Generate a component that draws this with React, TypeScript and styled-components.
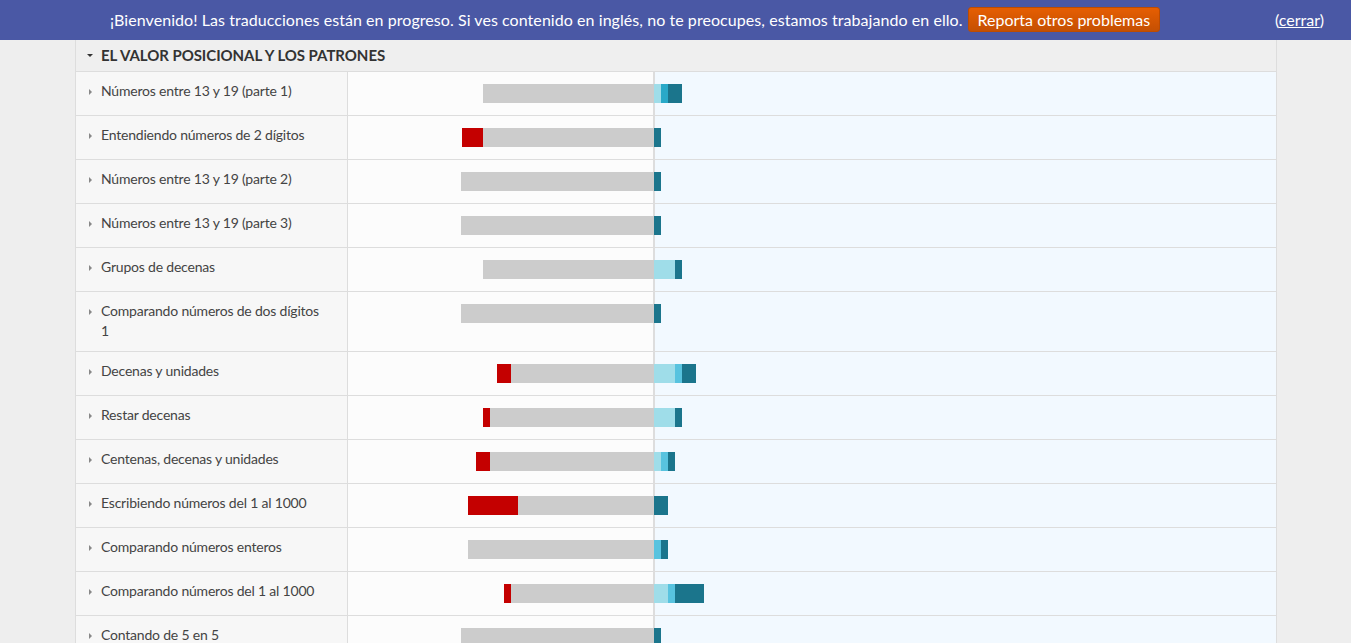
import React from "react";
import styled, { createGlobalStyle } from "styled-components";

const Global = createGlobalStyle`
  html, body { margin: 0; padding: 0; background: #eeeeee; overflow: hidden; }
  body { font-family: Lato, "Open Sans", "Liberation Sans", sans-serif; color: #444; }
`;

const TopBar = styled.div`
  height: 40px;
  background: #4a58a5;
  display: flex;
  align-items: center;
  padding: 0 27px 1px 110px;
  box-sizing: border-box;
  color: #fff;
  font-size: 16px;
`;

const Message = styled.span`
  white-space: nowrap;
  letter-spacing: 0.06px;
`;

const ReportButton = styled.span`
  margin-left: 5px;
  height: 25px;
  box-sizing: border-box;
  padding: 0 9px 1px;
  display: inline-flex;
  align-items: center;
  border-radius: 3px;
  border: 1px solid #bd4c02;
  background: linear-gradient(#e65e02, #c55003);
  color: #fff;
  white-space: nowrap;
`;

const Close = styled.span`
  margin-left: auto;
  white-space: nowrap;
  a { color: #fff; text-decoration: underline; }
`;

const Table = styled.div`
  margin: 0 74px 0 75px;
  border-left: 1px solid #dddddd;
  border-right: 1px solid #dddddd;
`;

const Header = styled.div`
  height: 31px;
  padding-bottom: 1px;
  box-sizing: border-box;
  background: #efefef;
  display: flex;
  align-items: center;
  font-weight: 700;
  font-size: 15px;
  color: #333;
  text-transform: uppercase;
  letter-spacing: -0.05px;
`;

const HeaderCaret = styled.span`
  width: 25px;
  display: flex;
  justify-content: center;
  &::before {
    content: "";
    margin-left: 3px;
    border-left: 3px solid transparent;
    border-right: 3px solid transparent;
    border-top: 3px solid #333;
  }
`;

const Row = styled.div`
  display: grid;
  grid-template-columns: 272px 1fr;
  border-top: 1px solid #dddddd;
`;

const Label = styled.div`
  background: #f7f7f7;
  border-right: 1px solid #dddddd;
  display: flex;
  align-items: flex-start;
  padding: 9px 20px 10px 0;
  font-size: 14px;
  line-height: 20px;
  letter-spacing: -0.2px;
  color: #444;
`;

const Caret = styled.span`
  flex: none;
  width: 25px;
  height: 20px;
  display: flex;
  align-items: center;
  justify-content: center;
  &::before {
    content: "";
    margin: 2px 0 0 3px;
    border-top: 3px solid transparent;
    border-bottom: 3px solid transparent;
    border-left: 3px solid #888;
  }
`;

const Chart = styled.div`
  position: relative;
  display: grid;
  grid-template-columns: 306px 1fr;
  &::before {
    content: "";
    position: absolute;
    left: 305px;
    top: 0;
    bottom: 0;
    width: 2px;
    background: #dddddd;
  }
`;

const NegPane = styled.div`
  background: #fcfcfc;
  padding: 12px 0;
  display: flex;
  justify-content: flex-end;
  align-items: flex-start;
`;

const PosPane = styled.div`
  background: #f2f9ff;
  padding: 12px 0;
  display: flex;
  justify-content: flex-start;
  align-items: flex-start;
`;

const Seg = styled.div<{ $c: string }>`
  position: relative;
  z-index: 1;
  height: 19px;
  flex: none;
  background: ${(p) => p.$c};
`;

const C = {
  red: "#c40000",
  gray: "#cccccc",
  light: "#9fdde9",
  mid: "#58c3df",
  midDeep: "#29a9c8",
  dark: "#1b758c",
};

type Item = {
  label: string;
  red?: number;
  gray: number;
  light?: number;
  mid?: number;
  midDeep?: boolean;
  dark?: number;
};

const rows: Item[] = [
  { label: "Números entre 13 y 19 (parte 1)", gray: 171, light: 7, mid: 7, midDeep: true, dark: 14 },
  { label: "Entendiendo números de 2 dígitos", red: 21, gray: 171, dark: 7 },
  { label: "Números entre 13 y 19 (parte 2)", gray: 193, dark: 7 },
  { label: "Números entre 13 y 19 (parte 3)", gray: 193, dark: 7 },
  { label: "Grupos de decenas", gray: 171, light: 21, dark: 7 },
  { label: "Comparando números de dos dígitos 1", gray: 193, dark: 7 },
  { label: "Decenas y unidades", red: 14, gray: 143, light: 21, mid: 7, dark: 14 },
  { label: "Restar decenas", red: 7, gray: 164, light: 21, dark: 7 },
  { label: "Centenas, decenas y unidades", red: 14, gray: 164, light: 7, mid: 7, dark: 7 },
  { label: "Escribiendo números del 1 al 1000", red: 50, gray: 136, dark: 14 },
  { label: "Comparando números enteros", gray: 186, mid: 7, dark: 7 },
  { label: "Comparando números del 1 al 1000", red: 7, gray: 143, light: 14, mid: 7, dark: 29 },
  { label: "Contando de 5 en 5", gray: 193, dark: 7 },
  { label: "Contando de 10 en 10", gray: 193, dark: 7 },
];

export default function App() {
  return (
    <>
      <Global />
      <TopBar>
        <Message>
          ¡Bienvenido! Las traducciones están en progreso. Si ves contenido en inglés, no te preocupes, estamos trabajando en ello.
        </Message>
        <ReportButton>Reporta otros problemas</ReportButton>
        <Close>
          (<a href="#">cerrar</a>)
        </Close>
      </TopBar>
      <Table>
        <Header>
          <HeaderCaret />
          El valor posicional y los patrones
        </Header>
        {rows.map((r) => (
          <Row key={r.label}>
            <Label>
              <Caret />
              <span>{r.label}</span>
            </Label>
            <Chart>
              <NegPane>
                {r.red ? <Seg $c={C.red} style={{ width: r.red }} /> : null}
                <Seg $c={C.gray} style={{ width: r.gray }} />
              </NegPane>
              <PosPane>
                {r.light ? <Seg $c={C.light} style={{ width: r.light }} /> : null}
                {r.mid ? <Seg $c={r.midDeep ? C.midDeep : C.mid} style={{ width: r.mid }} /> : null}
                {r.dark ? <Seg $c={C.dark} style={{ width: r.dark }} /> : null}
              </PosPane>
            </Chart>
          </Row>
        ))}
      </Table>
    </>
  );
}
